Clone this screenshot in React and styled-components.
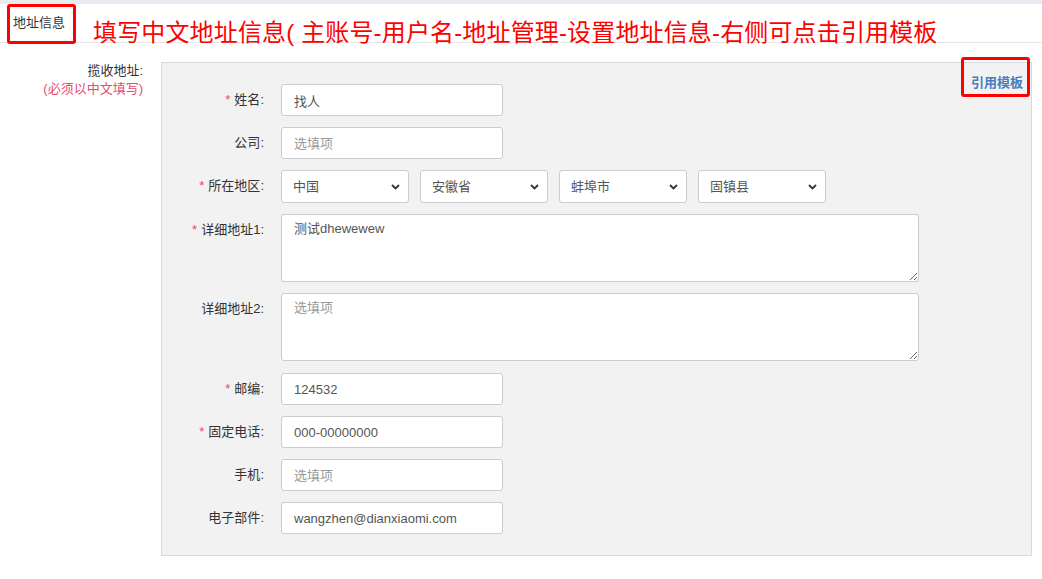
import React from 'react'
import styled, { createGlobalStyle } from 'styled-components'

const Global = createGlobalStyle`
  html, body { margin: 0; padding: 0; background: #fff; }
  body {
    font-family: "Liberation Sans", "Noto Sans CJK SC", sans-serif;
    font-size: 13px;
    color: #333;
  }
  * { box-sizing: border-box; }
`

const TopStrip = styled.div`
  height: 4px;
  background: #e8ecf1;
`

const Header = styled.div`
  display: flex;
  align-items: flex-start;
  height: 39px;
  border-bottom: 1px solid #e6e6e6;
`

const Tab = styled.div`
  margin-left: 7px;
  height: 40px;
  width: 69px;
  padding: 7px 0 0 3px;
  border: 3px solid #f00;
  border-radius: 3px;
  line-height: 18px;
  color: #333;
  position: relative;
  z-index: 1;
`

const Note = styled.div`
  margin-left: 17px;
  padding-top: 16px;
  font-size: 24px;
  line-height: 26px;
  letter-spacing: 0.15px;
  color: #f00;
  white-space: nowrap;
`

const Body = styled.div`
  display: flex;
  padding-top: 19px;
`

const Aside = styled.div`
  width: 161px;
  flex: none;
  padding-right: 18px;
  text-align: right;
  line-height: 18px;
  color: #333;
`

const Hint = styled.div`
  color: #e84a70;
`

const Panel = styled.div`
  position: relative;
  flex: 1;
  margin-right: 10px;
  background: #f2f2f2;
  border: 1px solid #d9d9d9;
  padding: 21px 0 21px;
  display: flex;
  flex-direction: column;
  gap: 11px;
`

const QuoteLink = styled.a`
  position: absolute;
  top: -6px;
  right: 1px;
  width: 69px;
  height: 40px;
  padding: 15px 0 0 7px;
  border: 3px solid #f00;
  border-radius: 3px;
  font-weight: bold;
  color: #4a7cc0;
  text-decoration: none;
  line-height: 16px;
  cursor: pointer;
`

const Row = styled.div`
  display: flex;
  align-items: flex-start;
  margin-bottom: ${p => (p.$extra ? '1px' : '0')};
`

const Label = styled.label`
  width: 102px;
  flex: none;
  margin-right: 17px;
  text-align: right;
  line-height: 32px;
  color: #333;
`

const Star = styled.span`
  color: #e84a70;
  margin-right: 4px;
`

const Input = styled.input`
  width: 222px;
  height: 32px;
  padding: 0 12px;
  border: 1px solid #ccc;
  border-radius: 3px;
  background: #fff;
  font: inherit;
  color: #555;
  outline: none;
  &::placeholder { color: #999; }
`

const TextArea = styled.textarea`
  display: block;
  width: 638px;
  height: 68px;
  padding: 5px 12px;
  border: 1px solid #ccc;
  border-radius: 3px;
  background: #fff;
  font: inherit;
  line-height: 18px;
  color: #555;
  outline: none;
  &::placeholder { color: #999; }
`

const Selects = styled.div`
  display: flex;
  gap: 11px;
`

const SelectWrap = styled.div`
  position: relative;
  width: 128px;
  height: 33px;
`

const Select = styled.select`
  appearance: none;
  width: 100%;
  height: 100%;
  padding: 0 20px 0 11px;
  border: 1px solid #ccc;
  border-radius: 3px;
  background: #fff;
  font: inherit;
  color: #555;
  outline: none;
`

const Chevron = styled.svg`
  position: absolute;
  right: 9px;
  top: 14px;
  pointer-events: none;
`

function RegionSelect({ value }) {
  return (
    <SelectWrap>
      <Select defaultValue={value}>
        <option value={value}>{value}</option>
      </Select>
      <Chevron width="9" height="6" viewBox="0 0 9 6">
        <path d="M1 1l3.5 3.5L8 1" fill="none" stroke="#333" strokeWidth="1.8" />
      </Chevron>
    </SelectWrap>
  )
}

function Field({ label, required, extra, children }) {
  return (
    <Row $extra={extra}>
      <Label>
        {required && <Star>*</Star>}
        {label}:
      </Label>
      {children}
    </Row>
  )
}

export default function App() {
  return (
    <>
      <Global />
      <TopStrip />
      <Header>
        <Tab>地址信息</Tab>
        <Note>填写中文地址信息( 主账号-用户名-地址管理-设置地址信息-右侧可点击引用模板</Note>
      </Header>
      <Body>
        <Aside>
          揽收地址:
          <Hint>(必须以中文填写)</Hint>
        </Aside>
        <Panel>
          <QuoteLink>引用模板</QuoteLink>
          <Field label="姓名" required>
            <Input defaultValue="找人" />
          </Field>
          <Field label="公司">
            <Input placeholder="选填项" />
          </Field>
          <Field label="所在地区" required>
            <Selects>
              <RegionSelect value="中国" />
              <RegionSelect value="安徽省" />
              <RegionSelect value="蚌埠市" />
              <RegionSelect value="固镇县" />
            </Selects>
          </Field>
          <Field label="详细地址1" required>
            <TextArea defaultValue="测试dhewewew" />
          </Field>
          <Field label="详细地址2" extra>
            <TextArea placeholder="选填项" />
          </Field>
          <Field label="邮编" required>
            <Input defaultValue="124532" />
          </Field>
          <Field label="固定电话" required>
            <Input defaultValue="000-00000000" />
          </Field>
          <Field label="手机">
            <Input placeholder="选填项" />
          </Field>
          <Field label="电子部件">
            <Input defaultValue="wangzhen@dianxiaomi.com" />
          </Field>
        </Panel>
      </Body>
    </>
  )
}
